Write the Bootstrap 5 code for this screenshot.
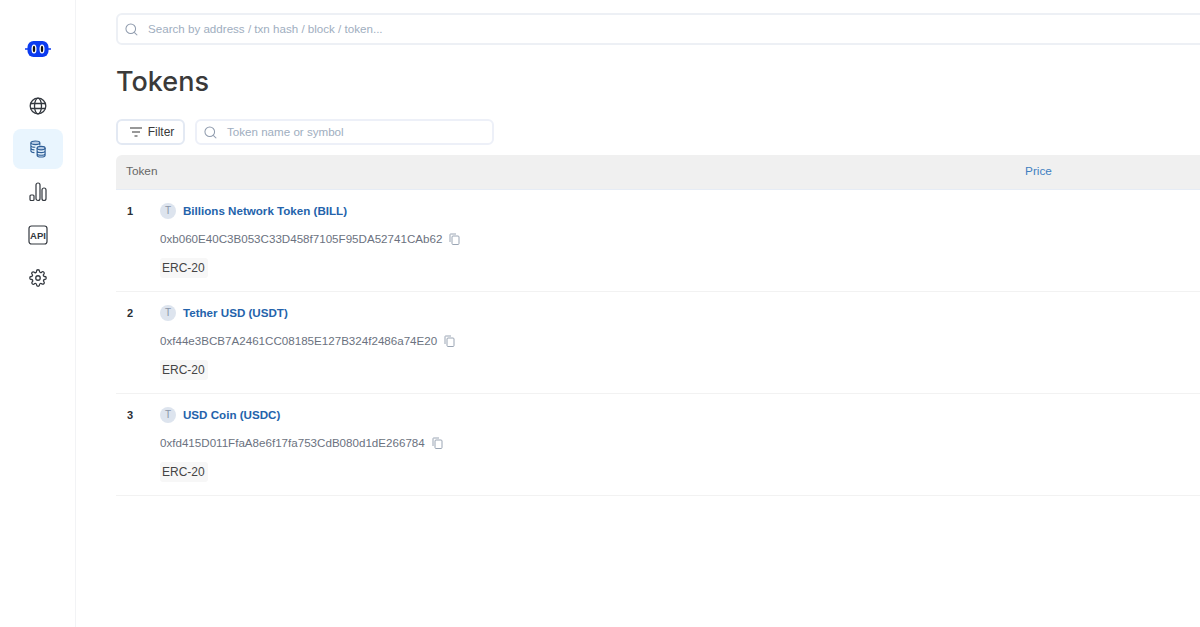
<!DOCTYPE html>
<html lang="en">
<head>
    <meta charset="UTF-8">
    <meta name="viewport" content="width=device-width, initial-scale=1.0">
    <title>Tokens</title>
    <link href="https://cdn.jsdelivr.net/npm/bootstrap@5.3.3/dist/css/bootstrap.min.css" rel="stylesheet">
    <style>
        html, body {
            height: 100%;
            overflow: hidden;
        }
        body {
            font-family: "Liberation Sans", Arial, sans-serif;
            font-size: 11.6px;
            color: #3a3a3a;
            background: #fff;
        }
        .side-bar {
            width: 76px;
            flex: 0 0 76px;
            height: 100vh;
            border-right: 1px solid #f2f3f5;
            padding-top: 38px;
        }
        .side-logo {
            height: 22px;
            margin-bottom: 26px;
        }
        .side-item {
            width: 50px;
            height: 40px;
            margin: 0 0 3px 13px;
            border-radius: 8px;
            color: #33383f;
        }
        .side-item.active-item {
            background: #e9f5fe;
            color: #2f5f97;
        }
        .main-col {
            flex: 0 0 1300px;
            padding: 13px 0 0 40px;
        }
        .search-main {
            height: 32px;
            border: 2px solid #edf0f5;
            border-radius: 6px;
            padding-left: 7px;
            color: #a0aec0;
            gap: 10px;
        }
        .page-title {
            font-family: "Inter", sans-serif;
            font-size: 27px;
            font-weight: 500;
            line-height: 32px;
            color: #3a3a3a;
            margin: 21px 0 21px 0;
        }
        .filter-btn {
            width: 69px;
            height: 26px;
            border: 2px solid #e3e9f3;
            border-radius: 6px;
            gap: 5px;
            padding: 0 0 0 2px;
            background: #fff;
            color: #3a3a3a;
            font-size: 12px;
        }
        .search-token {
            width: 299px;
            height: 26px;
            border: 2px solid #edf0f8;
            border-radius: 6px;
            padding-left: 7px;
            gap: 10px;
            color: #a0aec0;
        }
        .tool-row {
            gap: 10px;
            margin-bottom: 10px;
        }
        .token-table {
            width: 1300px;
            table-layout: fixed;
            margin: 0;
        }
        .num-col { width: 43px; }
        .name-col { width: 856px; }
        .token-table th {
            height: 34px;
            padding: 1px 10px 0;
            background: #f0f0f0;
            border-bottom: 1px solid #e6ecf5;
            font-weight: 400;
            font-size: 11.8px;
            color: #666;
            vertical-align: middle;
        }
        .token-table th:first-child {
            border-top-left-radius: 6px;
        }
        .token-table th.price-head {
            color: #3f7fc1;
        }
        .token-table td {
            height: 102px;
            padding: 0 0 0 1px;
            border-bottom: 1px solid #f2f2f2;
            vertical-align: top;
        }
        .token-table td.row-num {
            padding: 14px 0 0 11px;
            font-size: 11px;
            font-weight: 700;
            line-height: 14px;
            color: #2a2f36;
        }
        .name-line {
            height: 16px;
            margin-top: 13px;
            gap: 7px;
        }
        .token-icon {
            width: 16px;
            height: 16px;
            border-radius: 50%;
            background: #dde4ee;
            color: #8a96a8;
            font-size: 10px;
            line-height: 16px;
            text-align: center;
        }
        .token-name {
            font-size: 11.6px;
            font-weight: 700;
            color: #2463ab;
            text-decoration: none;
        }
        .addr-line {
            margin-top: 12px;
            height: 16px;
            gap: 7px;
            color: #6b7280;
            font-size: 11.6px;
        }
        .type-tag {
            display: inline-block;
            margin-top: 11px;
            padding: 0 3px 0 2px;
            height: 20px;
            line-height: 20px;
            border-radius: 3px;
            background: #f7f7f7;
            font-size: 12px;
            color: #444;
        }
    </style>
</head>
<body>
    <div class="d-flex">
        <aside class="side-bar">
            <div class="side-logo d-flex justify-content-center">
                <svg width="26" height="22" viewBox="0 0 26 22">
                    <path d="M0 11h3M23 11h3" stroke="#0b3bf0" stroke-width="1.500"/>
                    <rect x="2.500" y="3" width="21" height="16" rx="6" fill="#0b3bf0"/>
                    <ellipse cx="9" cy="11" rx="2.500" ry="4.500" fill="#fff"/>
                    <ellipse cx="17" cy="11" rx="2.500" ry="4.500" fill="#fff"/>
                    <ellipse cx="9" cy="11" rx="1.200" ry="3.200" fill="#111"/>
                    <ellipse cx="17" cy="11" rx="1.200" ry="3.200" fill="#111"/>
                </svg>
            </div>
            <div class="side-item d-flex align-items-center justify-content-center">
                <svg width="18" height="18" viewBox="0 0 18 18" fill="none" stroke="currentColor" stroke-width="1.300">
                    <circle cx="9" cy="9" r="7.800"/>
                    <ellipse cx="9" cy="9" rx="3.500" ry="7.800"/>
                    <path d="M1.600 6.500h14.800M1.600 11.500h14.800"/>
                </svg>
            </div>
            <div class="side-item active-item d-flex align-items-center justify-content-center">
                <svg width="16" height="18" viewBox="0 0 18 20" fill="none" stroke="currentColor" stroke-width="1.300">
                    <ellipse cx="6" cy="3" rx="5" ry="2" fill="#b9cde6"/>
                    <path d="M1 3v9c0 1.100 2 2 4 2M11 3v3M1 6c0 1.100 2 2 5 2M1 9c0 1.100 2 2 4 2"/>
                    <ellipse cx="12.500" cy="9" rx="4.500" ry="2" fill="#b9cde6"/>
                    <path d="M8 9v8c0 1.100 2 2 4.500 2s4.500-.9 4.500-2V9M8 12c0 1.100 2 2 4.500 2s4.500-.9 4.500-2M8 15c0 1.100 2 2 4.500 2s4.500-.9 4.500-2"/>
                </svg>
            </div>
            <div class="side-item d-flex align-items-center justify-content-center">
                <svg width="18" height="20" viewBox="0 0 18 20" fill="none" stroke="currentColor" stroke-width="1.200">
                    <rect x="1" y="13" width="4" height="5.500" rx="1"/>
                    <rect x="7" y="1" width="4" height="17.500" rx="2"/>
                    <rect x="13" y="6" width="4" height="12.500" rx="2"/>
                </svg>
            </div>
            <div class="side-item d-flex align-items-center justify-content-center">
                <svg width="20" height="20" viewBox="0 0 20 20">
                    <rect x="1" y="1" width="18" height="18" rx="2.500" fill="none" stroke="currentColor" stroke-width="1.200"/>
                    <text x="10" y="13.800" text-anchor="middle" font-family="Liberation Sans, sans-serif" font-size="9.500" font-weight="700" fill="currentColor">API</text>
                </svg>
            </div>
            <div class="side-item d-flex align-items-center justify-content-center">
                <svg width="18" height="18" viewBox="0 0 24 24" fill="none" stroke="currentColor" stroke-width="1.700" stroke-linejoin="round">
                    <circle cx="12" cy="12" r="3"/>
                    <path d="M19.400 15a1.650 1.650 0 0 0 .33 1.820l.06.06a2 2 0 1 1-2.830 2.830l-.06-.06a1.650 1.650 0 0 0-2.820 1.170V21a2 2 0 1 1-4 0v-.09a1.650 1.650 0 0 0-2.820-1.170l-.06.06a2 2 0 1 1-2.830-2.830l.06-.06A1.650 1.650 0 0 0 3.090 14H3a2 2 0 1 1 0-4h.09a1.650 1.650 0 0 0 1.170-2.820l-.06-.06a2 2 0 1 1 2.830-2.830l.06.06A1.650 1.650 0 0 0 10 3.090V3a2 2 0 1 1 4 0v.09a1.650 1.650 0 0 0 2.820 1.170l.06-.06a2 2 0 1 1 2.830 2.830l-.06.06A1.650 1.650 0 0 0 20.910 10H21a2 2 0 1 1 0 4h-.09a1.650 1.650 0 0 0-1.510 1z"/>
                </svg>
            </div>
        </aside>

        <main class="main-col">
            <div class="search-main d-flex align-items-center">
                <svg width="13" height="13" viewBox="0 0 14 14" fill="none" stroke="#8f9bad" stroke-width="1.100"><circle cx="6.200" cy="6.200" r="5.200"/><path d="M10 10l3.200 3.200"/></svg>
                <span>Search by address / txn hash / block / token...</span>
            </div>

            <h1 class="page-title">Tokens</h1>

            <div class="tool-row d-flex">
                <button class="filter-btn d-flex align-items-center justify-content-center" type="button">
                    <svg width="14" height="10" viewBox="0 0 14 10" fill="none" stroke="#333" stroke-width="1.200"><path d="M1 1h12M3 5h8M5.500 9h3"/></svg>
                    <span>Filter</span>
                </button>
                <div class="search-token d-flex align-items-center">
                    <svg width="13" height="13" viewBox="0 0 14 14" fill="none" stroke="#8f9bad" stroke-width="1.100"><circle cx="6.200" cy="6.200" r="5.200"/><path d="M10 10l3.200 3.200"/></svg>
                    <span>Token name or symbol</span>
                </div>
            </div>

            <table class="table token-table">
                <colgroup>
                    <col class="num-col">
                    <col class="name-col">
                    <col>
                </colgroup>
                <thead>
                    <tr>
                        <th colspan="2">Token</th>
                        <th class="price-head">Price</th>
                    </tr>
                </thead>
                <tbody id="tokenRows"></tbody>
            </table>
        </main>
    </div>

    <script src="https://cdn.jsdelivr.net/npm/bootstrap@5.3.3/dist/js/bootstrap.bundle.min.js"></script>
    <script>
        const tokens = [
            { name: 'Billions Network Token (BILL)', addr: '0xb060E40C3B053C33D458f7105F95DA52741CAb62' },
            { name: 'Tether USD (USDT)', addr: '0xf44e3BCB7A2461CC08185E127B324f2486a74E20' },
            { name: 'USD Coin (USDC)', addr: '0xfd415D011FfaA8e6f17fa753CdB080d1dE266784' }
        ];
        const copyIcon = '<svg width="11" height="12" viewBox="0 0 11 12" fill="none" stroke="#9aa5b4" stroke-width="1"><path d="M1 9V1.500a.5.5 0 0 1 .5-.5H7"/><rect x="3" y="3" width="7" height="8.500" rx="1"/></svg>';

        document.getElementById('tokenRows').innerHTML = tokens.map(function (t, i) {
            return '<tr><td class="row-num">' + (i + 1) + '</td><td colspan="2">' +
                '<div class="name-line d-flex align-items-center"><span class="token-icon">T</span><a class="token-name" href="#">' + t.name + '</a></div>' +
                '<div class="addr-line d-flex align-items-center"><span>' + t.addr + '</span>' + copyIcon + '</div>' +
                '<span class="type-tag">ERC-20</span></td></tr>';
        }).join('');
    </script>
</body>
</html>
